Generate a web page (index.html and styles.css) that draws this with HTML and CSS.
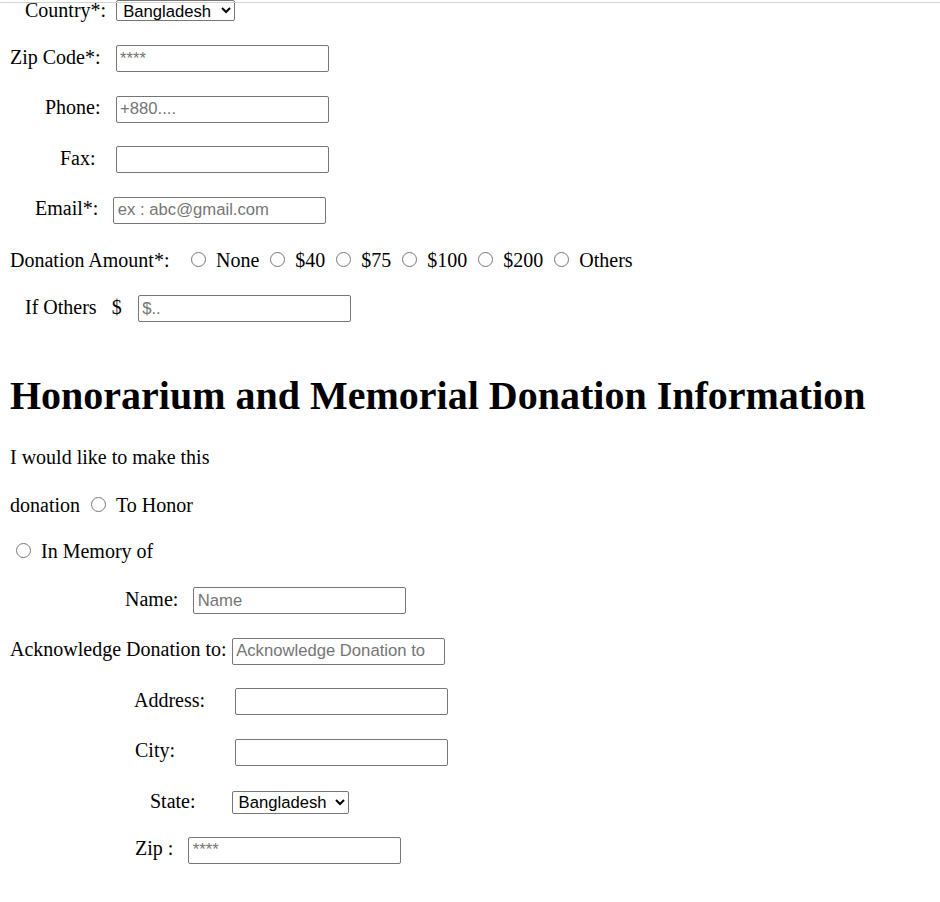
FILE: index.html
```html
<!DOCTYPE html>
<html lang="en">
<head>
<meta charset="utf-8">
<title>Donation Form</title>
<link rel="stylesheet" href="styles.css">
</head>
<body>
<div class="topline"></div>
<form class="form">
  <div class="row row-country">
    <span class="lbl lbl-country">Country*:</span>
    <select class="sel sel-country"><option>Bangladesh</option></select>
  </div>
  <div class="row row-zip">
    <span class="lbl">Zip Code*:</span>
    <input class="txt gap15" type="text" placeholder="****">
  </div>
  <div class="row row-std">
    <span class="lbl lbl-phone">Phone:</span>
    <input class="txt gap15" type="text" placeholder="+880....">
  </div>
  <div class="row row-std">
    <span class="lbl lbl-fax">Fax:</span>
    <input class="txt gap20" type="text">
  </div>
  <div class="row row-std">
    <span class="lbl lbl-email">Email*:</span>
    <input class="txt gap15" type="text" placeholder="ex : abc@gmail.com">
  </div>
  <div class="row row-amount">
    <span class="lbl">Donation Amount*:</span>
    <input class="radio radio-first" type="radio" name="amount"><span>None</span>
    <input class="radio" type="radio" name="amount"><span>$40</span>
    <input class="radio" type="radio" name="amount"><span>$75</span>
    <input class="radio" type="radio" name="amount"><span>$100</span>
    <input class="radio" type="radio" name="amount"><span>$200</span>
    <input class="radio" type="radio" name="amount"><span>Others</span>
  </div>
  <div class="row row-others">
    <span class="lbl lbl-others">If Others</span>
    <span class="lbl gap15">$</span>
    <input class="txt gap16" type="text" placeholder="$..">
  </div>

  <h1 class="title">Honorarium and Memorial Donation Information</h1>

  <p class="line line-intro">I would like to make this</p>
  <div class="line line-honor">
    <span>donation</span>
    <input class="radio radio-after-word" type="radio" name="kind"><span>To Honor</span>
  </div>
  <div class="line line-memory">
    <input class="radio radio-lead" type="radio" name="kind"><span>In Memory of</span>
  </div>

  <div class="row row-name">
    <span class="lbl lbl-name">Name:</span>
    <input class="txt gap15" type="text" placeholder="Name">
  </div>
  <div class="row row-std">
    <span class="lbl">Acknowledge Donation to:</span>
    <input class="txt gap5" type="text" placeholder="Acknowledge Donation to">
  </div>
  <div class="row row-std">
    <span class="lbl lbl-address">Address:</span>
    <input class="txt gap30" type="text">
  </div>
  <div class="row row-std">
    <span class="lbl lbl-city">City:</span>
    <input class="txt gap60" type="text">
  </div>
  <div class="row row-state">
    <span class="lbl lbl-state">State:</span>
    <select class="sel sel-state"><option>Bangladesh</option></select>
  </div>
  <div class="row row-zip2">
    <span class="lbl lbl-city">Zip :</span>
    <input class="txt gap15" type="text" placeholder="****">
  </div>
</form>
</body>
</html>
```

FILE: styles.css
```css
html, body {
  background: #fff;
}

body {
  margin: 0 10px;
  font-family: "Liberation Serif", "Times New Roman", serif;
  font-size: 20px;
  color: #000;
}

.topline {
  position: fixed;
  top: 2px;
  left: 0;
  right: 0;
  height: 1px;
  background: #d3d3d3;
}

.form {
  display: flex;
  flex-direction: column;
  align-items: flex-start;
}

.row {
  display: flex;
  align-items: baseline;
  height: 27px;
  margin-top: 23.5px;
  white-space: nowrap;
}

.row-country { margin-top: -1px; height: 24px; }
.row-zip { margin-top: 22px; }
.row-amount { margin-top: 25.5px; }
.row-others { margin-top: 19px; }
.row-name { margin-top: 24px; }
.row-state { margin-top: 24px; height: 24px; }
.row-zip2 { margin-top: 23px; }

.lbl { white-space: nowrap; }
.lbl-country { padding-left: 15px; }
.lbl-phone { padding-left: 35px; }
.lbl-fax { padding-left: 50px; }
.lbl-email { padding-left: 25px; }
.lbl-others { padding-left: 15px; }
.lbl-name { padding-left: 115px; }
.lbl-address { padding-left: 124px; }
.lbl-city { padding-left: 125px; }
.lbl-state { padding-left: 140px; }

.gap5 { margin-left: 5px; }
.gap15 { margin-left: 15px; }
.gap16 { margin-left: 16px; }
.gap20 { margin-left: 20px; }
.gap30 { margin-left: 30px; }
.gap60 { margin-left: 60px; }

.txt {
  box-sizing: border-box;
  width: 213px;
  height: 27px;
  margin-top: 0;
  margin-bottom: 0;
  padding: 1px 3px 1px 3.5px;
  border: 1px solid #767676;
  border-radius: 2px;
  background: #fff;
  color: #000;
  font-family: "Liberation Sans", Arial, sans-serif;
  font-size: 16.67px;
}

.txt::placeholder {
  color: #757575;
  opacity: 1;
}

.sel {
  box-sizing: border-box;
  width: 119px;
  height: 21px;
  margin: 0;
  padding-left: 2px;
  border: 1px solid #767676;
  border-radius: 2px;
  background: #fff;
  color: #000;
  font-family: "Liberation Sans", Arial, sans-serif;
  font-size: 16.67px;
}

.sel-country { margin-left: 10px; }
.sel-state { margin-left: 36px; height: 23px; width: 117px; }

.radio {
  width: 15px;
  height: 15px;
  margin: 3px 10px 1px 11px;
}

.radio-first { margin-left: 21.5px; }

.title {
  margin: 49.5px 0 0;
  font-size: 40px;
  font-weight: bold;
  line-height: normal;
  white-space: nowrap;
}

.line {
  display: flex;
  align-items: baseline;
  margin: 0;
  white-space: nowrap;
}

.line-intro { margin-top: 27px; }
.line-honor { margin-top: 25px; }
.line-memory { margin-top: 23.5px; }

.radio-after-word { margin-left: 11px; }
.radio-lead { margin-left: 6px; }
```
